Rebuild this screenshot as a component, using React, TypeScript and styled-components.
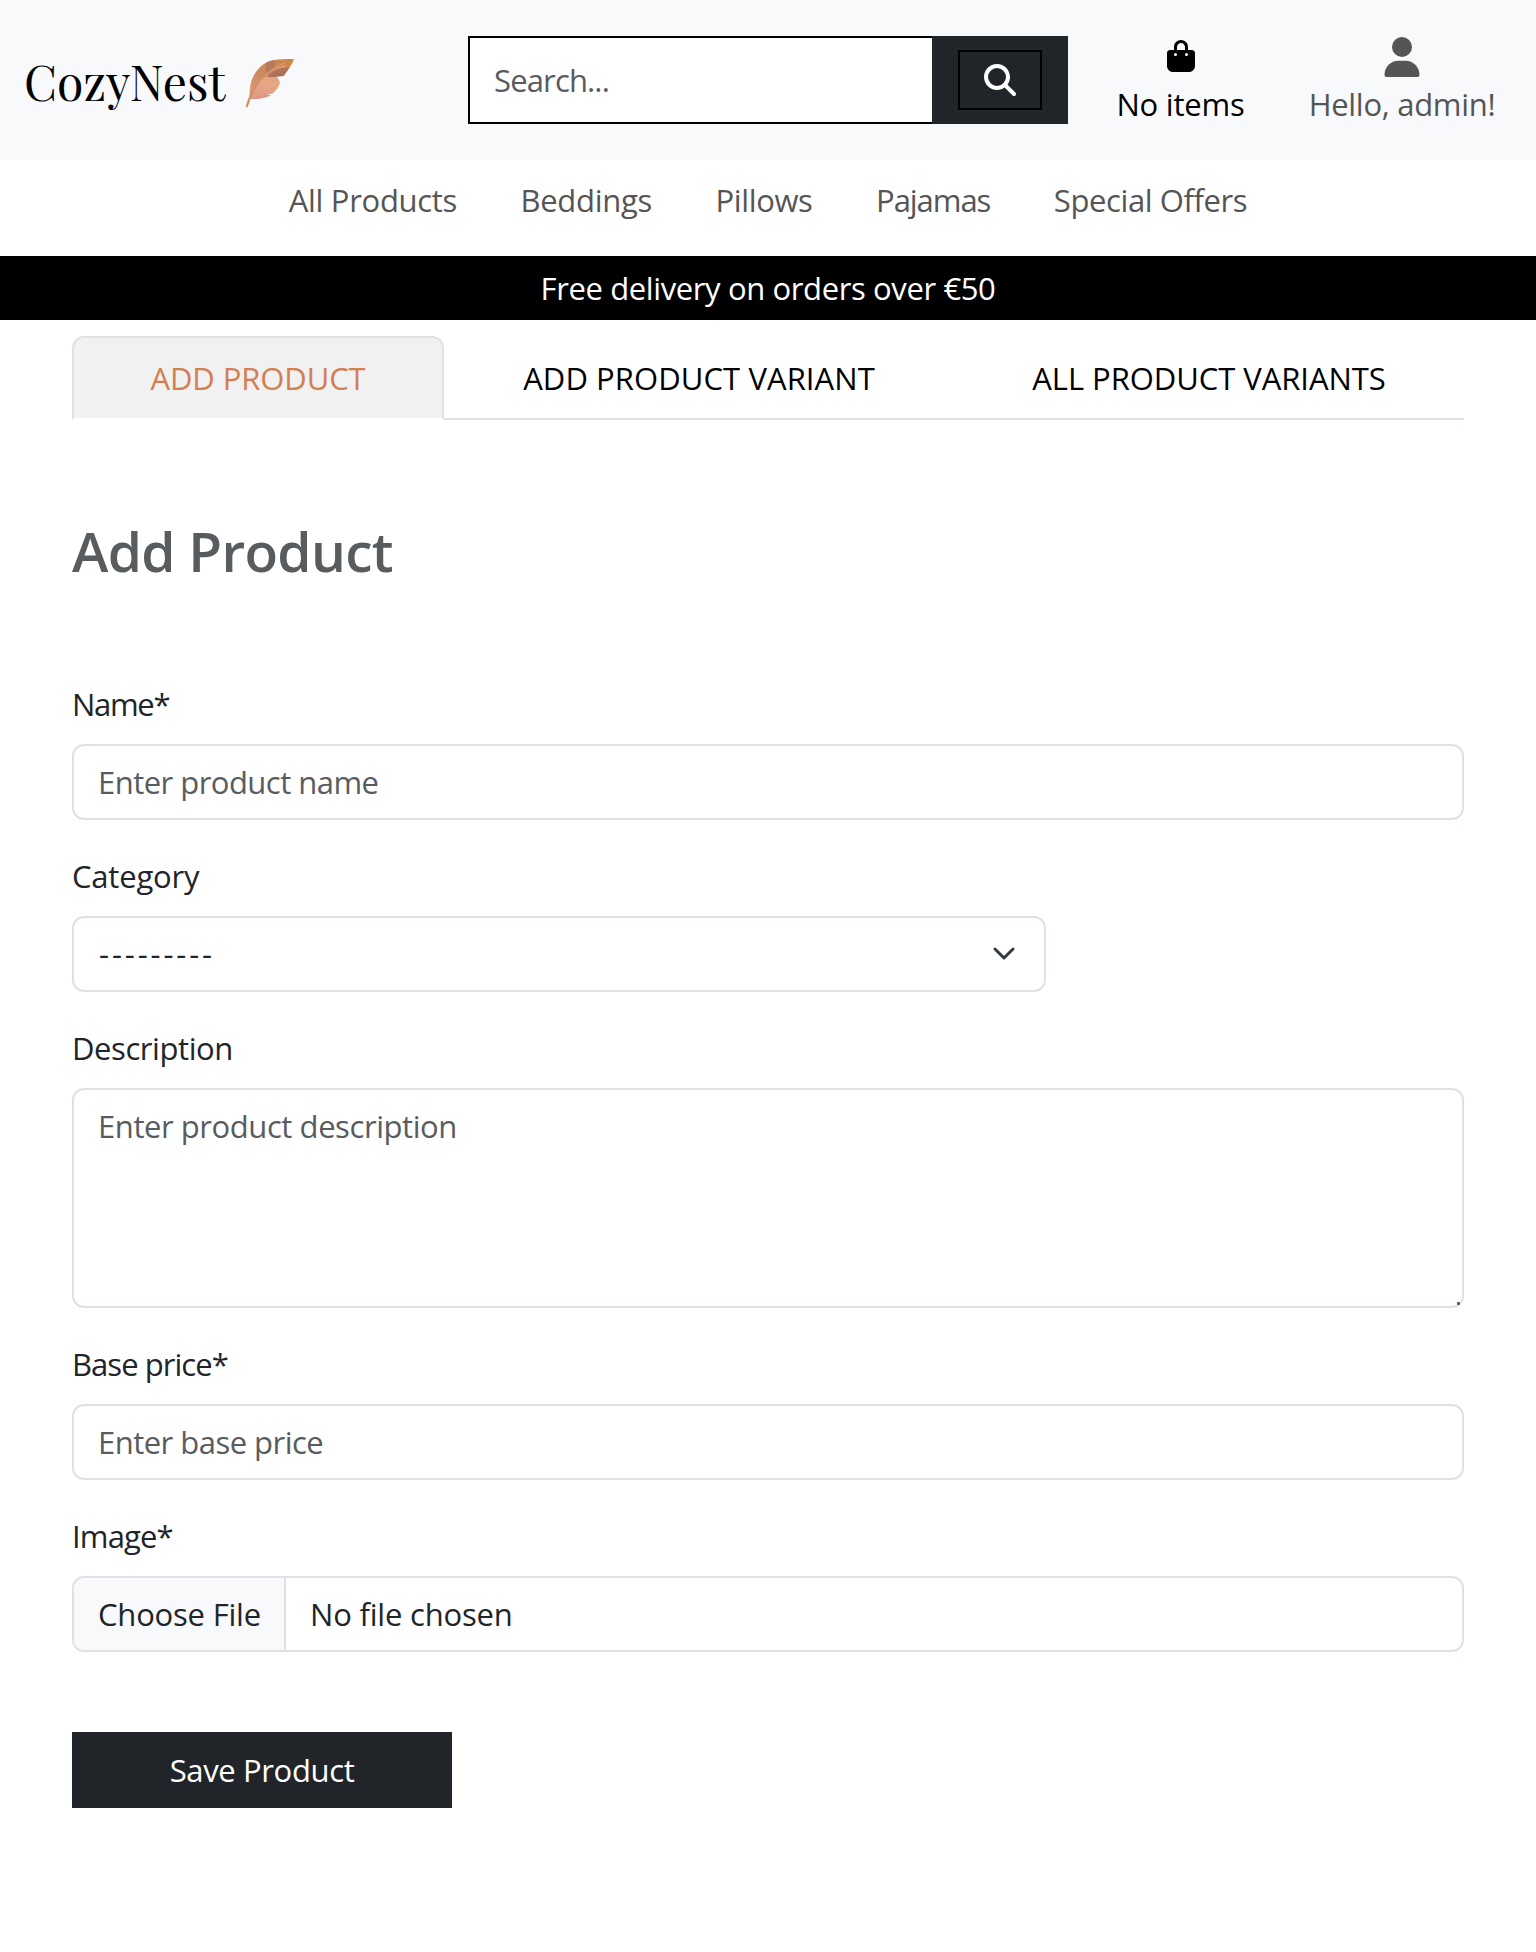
import React from "react";
import styled, { createGlobalStyle, css } from "styled-components";
import { FaBagShopping, FaMagnifyingGlass, FaUser } from "react-icons/fa6";

const ink = "#212529";
const muted = "#595c5f";
const line = "#dee2e6";
const soft = "#f8f9fb";

const GlobalStyle = createGlobalStyle`
  *, *::before, *::after { box-sizing: border-box; }
  body {
    margin: 0;
    background: #fff;
    color: ${ink};
    font-family: "Segoe UI", "Open Sans", "Noto Sans", sans-serif;
    font-size: 31px;
    line-height: 48px;
  }
  input, textarea, select, button { font: inherit; color: inherit; }
  a { color: inherit; text-decoration: none; }
`;

const Text = styled.span<{ $track?: number }>`
  letter-spacing: ${(p) => p.$track ?? -0.3}px;
  white-space: nowrap;
`;

const TopBar = styled.header`
  display: flex;
  align-items: center;
  height: 160px;
  padding: 0 40px 0 24px;
  background: ${soft};
`;

const Brand = styled.a`
  display: flex;
  align-items: center;
  flex: 0 0 444px;
  gap: 20px;
  && { color: #000; }
`;

const BrandName = styled.span`
  width: 201px;
  padding-top: 2px;
  font-family: "Playfair Display", "Liberation Serif", serif;
  font-size: 48px;
  line-height: 72px;
  white-space: nowrap;
`;

const FeatherArt = styled.svg`
  display: block;
  width: 50px;
  height: 52px;
  margin-top: 6px;
`;

const SearchForm = styled.form`
  display: flex;
  flex: 0 0 600px;
  height: 88px;
`;

const SearchInput = styled.input`
  flex: 1;
  min-width: 0;
  padding: 0 24px;
  border: 2px solid #000;
  border-right: 0;
  border-radius: 0;
  background: #fff;
  letter-spacing: -0.85px;
  outline: none;
  &::placeholder { color: ${muted}; opacity: 1; }
`;

const SearchAddon = styled.div`
  display: flex;
  align-items: center;
  justify-content: center;
  width: 136px;
  background: ${ink};
`;

const SearchButton = styled.button`
  display: flex;
  align-items: center;
  justify-content: center;
  width: 84px;
  height: 60px;
  padding: 0;
  border: 2px solid #000;
  background: transparent;
  && { color: #fff; font-size: 32px; }
`;

const Actions = styled.div`
  display: flex;
  gap: 65px;
  margin-left: 49px;
`;

const Action = styled.a<{ $width: number; $tone: string }>`
  display: flex;
  flex-direction: column;
  align-items: center;
  width: ${(p) => p.$width}px;
  && { color: ${(p) => p.$tone}; }
`;

const ActionIcon = styled.span<{ $size: number; $above: number }>`
  display: flex;
  height: 48px;
  padding-top: ${(p) => p.$above}px;
  font-size: ${(p) => p.$size}px;
`;

const CategoryNav = styled.nav`
  display: flex;
  justify-content: center;
  gap: 63.5px;
  height: 96px;
  padding-top: 16px;
  color: #555;
`;

const Banner = styled.div`
  padding: 8px 0;
  background: #000;
  color: #fff;
  text-align: center;
`;

const Page = styled.main`
  padding: 16px 72px 144px;
`;

const Tabs = styled.div`
  display: grid;
  grid-template-columns: 372px 1fr 1fr;
  border-bottom: 2px solid ${line};
`;

const Tab = styled.a<{ $active?: boolean }>`
  margin-bottom: -2px;
  padding: 16px 0;
  border: 2px solid transparent;
  border-radius: 12px 12px 0 0;
  text-align: center;
  && { color: #000; }
  ${(p) =>
    p.$active &&
    css`
      border-color: ${line} ${line} #fff;
      background: #f1f1f1 padding-box;
      && { color: #d37f52; }
    `}
`;

const Title = styled.h1`
  margin: 98px 0 96px;
  color: ${muted};
  font-size: 55px;
  font-weight: 600;
  line-height: 66px;
  letter-spacing: -0.7px;
`;

const Field = styled.div`
  margin-bottom: 32px;
`;

const Label = styled.label<{ $track: number }>`
  display: block;
  margin-bottom: 16px;
  letter-spacing: ${(p) => p.$track}px;
`;

const control = css`
  display: block;
  width: 100%;
  border: 2px solid ${line};
  border-radius: 12px;
  background: #fff;
  outline: none;
`;

const Input = styled.input<{ $track: number }>`
  ${control}
  height: 76px;
  padding: 12px 24px;
  letter-spacing: ${(p) => p.$track}px;
  &::placeholder { color: ${muted}; opacity: 1; }
`;

const SelectWrap = styled.div`
  position: relative;
  width: 974px;
`;

const Select = styled.select`
  ${control}
  appearance: none;
  height: 76px;
  padding: 11px 72px 13px 25px;
  letter-spacing: 2.9px;
`;

const Chevron = styled.svg`
  position: absolute;
  top: 22px;
  right: 26px;
  width: 32px;
  height: 32px;
  pointer-events: none;
`;

const TextAreaWrap = styled.div`
  position: relative;
`;

const TextArea = styled.textarea`
  ${control}
  height: 220px;
  padding: 12px 24px;
  letter-spacing: -0.43px;
  resize: none;
  &::placeholder { color: ${muted}; opacity: 1; }
`;

const Grip = styled.span`
  position: absolute;
  right: 4px;
  bottom: 3px;
  width: 3px;
  height: 3px;
  border-radius: 1px;
  background: #55585b;
`;

const FileControl = styled.div`
  ${control}
  display: flex;
  height: 76px;
  overflow: hidden;
`;

const FileButton = styled.button`
  width: 212px;
  padding: 0 24px;
  border: 0;
  border-right: 2px solid ${line};
  background: ${soft};
  text-align: left;
`;

const FileName = styled.span`
  padding: 12px 24px;
`;

const SaveButton = styled.button`
  display: block;
  width: 380px;
  height: 76px;
  margin-top: 80px;
  padding: 14px 0;
  border: 0;
  background: ${ink};
  text-align: center;
  && { color: #fff; }
`;

function Feather() {
  return (
    <FeatherArt viewBox="0 0 50 52" aria-hidden="true">
      <defs>
        <linearGradient id="vane" x1="0.7" y1="0" x2="0.4" y2="1">
          <stop offset="0" stopColor="#cd8546" />
          <stop offset="0.4" stopColor="#cb8b5d" />
          <stop offset="0.72" stopColor="#dc9a75" />
          <stop offset="1" stopColor="#dc8b80" />
        </linearGradient>
        <linearGradient id="lower" x1="0.6" y1="0" x2="0.4" y2="1">
          <stop offset="0" stopColor="#d99a6e" />
          <stop offset="0.5" stopColor="#e6a883" />
          <stop offset="1" stopColor="#e2988a" />
        </linearGradient>
        <linearGradient id="shade" x1="0" y1="0" x2="1" y2="1">
          <stop offset="0" stopColor="#b67b5d" />
          <stop offset="1" stopColor="#a9655a" />
        </linearGradient>
        <clipPath id="outline">
          <path d="M49 2.3C41 1.6 32 2.2 25 4C16 7.2 9 15.500 6.300 24.500C4.800 30 4.500 35 4.700 40.500L6 42C10 42.200 18 42 25.800 38.300L21.300 37.300C24 36.900 26.800 37 28.800 35.300C32 32.200 35.800 27 34.200 24C33.500 22 32.500 20.500 30.500 19.600L38.600 19C42 14.500 47.500 6.500 49 2.300Z" />
        </clipPath>
      </defs>
      <g clipPath="url(#outline)">
        <rect width="50" height="52" fill="url(#vane)" />
        <path d="M40.500 6.500C25 13 13 23 5.500 39L6 44H40V19Z" fill="url(#lower)" />
        <path d="M21 4L30 3V11L21 18.500Z" fill="#ad7462" opacity="0.75" />
        <path d="M22 19.500C26 15 31 11.500 40 10.500H46L38.500 20H21Z" fill="url(#shade)" />
        <path d="M14 38C19 36.500 24 37.500 29 35L26 39L6 43Z" fill="#e08f82" opacity="0.5" />
      </g>
      <path d="M40.500 6.200C24 12.500 11 24 5.800 38.500C4.300 42 2.900 45.500 1.800 49.300" fill="none" stroke="#c07a4e" strokeWidth="2.100" strokeLinecap="round" />
      <path d="M40.500 6C24 12.300 10.700 24 5.500 38.500C4 42 2.600 45.500 1.500 49.200" fill="none" stroke="#e3a073" strokeWidth="1.100" strokeLinecap="round" />
    </FeatherArt>
  );
}

const categories: { name: string; track: number }[] = [
  { name: "All Products", track: -0.31 },
  { name: "Beddings", track: -0.3 },
  { name: "Pillows", track: -0.35 },
  { name: "Pajamas", track: -1.05 },
  { name: "Special Offers", track: -0.4 },
];

export default function App() {
  return (
    <>
      <GlobalStyle />
      <TopBar>
        <Brand href="#">
          <BrandName>CozyNest</BrandName>
          <Feather />
        </Brand>
        <SearchForm>
          <SearchInput placeholder="Search..." />
          <SearchAddon>
            <SearchButton type="button" aria-label="Search">
              <FaMagnifyingGlass />
            </SearchButton>
          </SearchAddon>
        </SearchForm>
        <Actions>
          <Action href="#" $width={127} $tone="#000">
            <ActionIcon $size={32} $above={8}>
              <FaBagShopping />
            </ActionIcon>
            <Text $track={-0.2}>No items</Text>
          </Action>
          <Action href="#" $width={186} $tone="#555">
            <ActionIcon $size={40} $above={5}>
              <FaUser />
            </ActionIcon>
            <Text $track={-0.3}>Hello, admin!</Text>
          </Action>
        </Actions>
      </TopBar>
      <CategoryNav>
        {categories.map((c) => (
          <a href="#" key={c.name}>
            <Text $track={c.track}>{c.name}</Text>
          </a>
        ))}
      </CategoryNav>
      <Banner>
        <Text $track={-0.38}>Free delivery on orders over €50</Text>
      </Banner>
      <Page>
        <Tabs>
          <Tab href="#" $active>
            <Text $track={-0.1}>ADD PRODUCT</Text>
          </Tab>
          <Tab href="#">
            <Text $track={0.08}>ADD PRODUCT VARIANT</Text>
          </Tab>
          <Tab href="#">
            <Text $track={-0.06}>ALL PRODUCT VARIANTS</Text>
          </Tab>
        </Tabs>
        <Title>Add Product</Title>
        <Field>
          <Label $track={-1.3}>Name*</Label>
          <Input $track={-0.53} placeholder="Enter product name" />
        </Field>
        <Field>
          <Label $track={-0.19}>Category</Label>
          <SelectWrap>
            <Select>
              <option>---------</option>
            </Select>
            <Chevron viewBox="0 0 32 32" aria-hidden="true">
              <path d="M7 11L16 20L25 11" fill="none" stroke="#343a40" strokeWidth="3" strokeLinecap="round" strokeLinejoin="round" />
            </Chevron>
          </SelectWrap>
        </Field>
        <Field>
          <Label $track={-0.42}>Description</Label>
          <TextAreaWrap>
            <TextArea placeholder="Enter product description" />
            <Grip />
          </TextAreaWrap>
        </Field>
        <Field>
          <Label $track={-0.95}>Base price*</Label>
          <Input $track={-0.52} placeholder="Enter base price" />
        </Field>
        <Field>
          <Label $track={-0.85}>Image*</Label>
          <FileControl>
            <FileButton type="button">
              <Text $track={-0.2}>Choose File</Text>
            </FileButton>
            <FileName>
              <Text $track={-0.2}>No file chosen</Text>
            </FileName>
          </FileControl>
        </Field>
        <SaveButton type="button">
          <Text $track={-0.36}>Save Product</Text>
        </SaveButton>
      </Page>
    </>
  );
}
